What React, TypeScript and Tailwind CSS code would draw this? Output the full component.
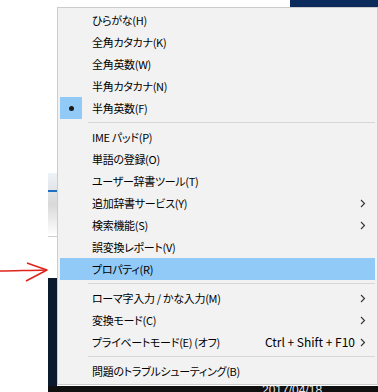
const items: (
  | { sep: true }
  | { sep?: false; label: string; shortcut?: string; sub?: boolean; checked?: boolean; active?: boolean }
)[] = [
  { label: 'ひらがな(H)' },
  { label: '全角カタカナ(K)' },
  { label: '全角英数(W)' },
  { label: '半角カタカナ(N)' },
  { label: '半角英数(F)', checked: true },
  { sep: true },
  { label: 'IME パッド(P)' },
  { label: '単語の登録(O)' },
  { label: 'ユーザー辞書ツール(T)' },
  { label: '追加辞書サービス(Y)', sub: true },
  { label: '検索機能(S)', sub: true },
  { label: '誤変換レポート(V)' },
  { label: 'プロパティ(R)', active: true },
  { sep: true },
  { label: 'ローマ字入力 / かな入力(M)', sub: true },
  { label: '変換モード(C)', sub: true },
  { label: 'プライベートモード(E) (オフ)', shortcut: 'Ctrl + Shift + F10', sub: true },
  { sep: true },
  { label: '問題のトラブルシューティング(B)' },
];

function Chevron() {
  return (
    <svg width="6" height="9" viewBox="0 0 6 9" className="ml-[5px] shrink-0" aria-hidden="true">
      <path d="M1 1 L4.5 4.5 L1 8" fill="none" stroke="#333" strokeWidth="1.1" />
    </svg>
  );
}

export default function App() {
  return (
    <div className="relative h-[392px] w-[378px] overflow-hidden bg-white">
      {/* desktop bits behind the menu */}
      <div className="absolute left-[290px] top-0 h-[7px] w-[88px] bg-[#0a2b5c]" />
      <div className="absolute left-[48px] top-[173px] h-[63px] w-[9px] bg-gradient-to-b from-[#eef3f8] via-[#d9d9d9] to-white">
        <div className="mt-[17px] h-[2px] bg-[#1f6fc2]" />
      </div>
      <div className="absolute left-[48px] top-[236px] h-px w-[9px] bg-[#cfcfcf]" />
      <div className="absolute left-[48px] top-[278px] h-[114px] w-[9px] bg-[#0b1a2c]" />
      <div className="absolute left-[48px] top-[386px] h-[6px] w-[330px] overflow-hidden bg-[#101010]">
        <div className="ml-[214px] mt-[-2px] font-['Liberation_Sans',sans-serif] text-[12px] leading-[12px] text-[#e8e8e8]">
          2017/04/18
        </div>
      </div>

      {/* red arrow */}
      <svg className="absolute left-0 top-[258px]" width="50" height="26" viewBox="0 0 50 26" aria-hidden="true">
        <path d="M0 13 C 15 12.5, 30 12.5, 45 12" fill="none" stroke="#e0241c" strokeWidth="1.6" />
        <path d="M27 5 Q 31 6.5 47 12 L 26 23" fill="none" stroke="#e0241c" strokeWidth="1.6" strokeLinejoin="round" />
      </svg>

      {/* context menu */}
      <div className="absolute left-[57px] top-[7px] w-[321px] border border-[#cccccc] bg-[#f2f2f2] pb-[2px] pt-[1px] font-['Noto_Sans_CJK_JP',sans-serif] text-black [font-feature-settings:'palt']">
        {items.map((it, i) =>
          it.sep ? (
            <div key={i} className="ml-[30px] mr-[2px] py-[3px]">
              <div className="h-px bg-[#d7d7d7]" />
            </div>
          ) : (
            <div
              key={i}
              className={`mx-[2px] flex h-[22px] items-center pr-[9px] ${it.active ? 'bg-[#91c9f7]' : ''}`}
            >
              <div className={`flex h-[22px] w-[22px] shrink-0 items-center justify-center ${it.checked ? 'bg-[#91c9f7]' : ''}`}>
                {it.checked && <div className="h-[5px] w-[5px] rounded-full bg-[#1a1a1a]" />}
              </div>
              <span className="ml-[10px] flex-1 whitespace-nowrap text-[11px] tracking-[-0.3px]">{it.label}</span>
              {it.shortcut && <span className="whitespace-nowrap text-[12px]">{it.shortcut}</span>}
              {it.sub && <Chevron />}
            </div>
          ),
        )}
      </div>
    </div>
  );
}
